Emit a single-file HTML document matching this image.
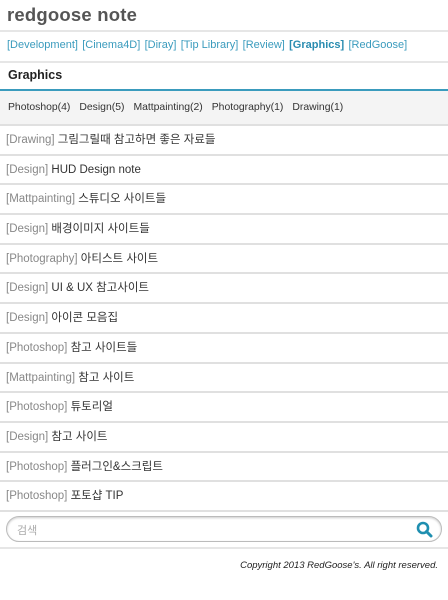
<!DOCTYPE html>
<html><head><meta charset="utf-8"><style>
*{margin:0;padding:0;box-sizing:border-box}
body{width:448px;height:600px;background:#fff;font-family:"Liberation Sans","Noto Sans CJK KR",sans-serif;overflow:hidden;position:relative}
h1{position:absolute;left:7px;top:4px;font-size:18.5px;color:#555;font-weight:bold;letter-spacing:0.2px}
.b{position:absolute;left:0;width:448px;height:2px;background:#e6e6e6}
.nav{position:absolute;left:7px;top:39px;font-size:11px;color:#3a9bbd;white-space:nowrap}
.nav span{margin-right:4.3px}
.nav b{color:#2a8cb0}
.h2{position:absolute;left:8px;top:68px;font-size:12.5px;font-weight:bold;color:#222}
.sub{position:absolute;left:0;top:89px;width:448px;height:35px;background:#f4f4f4;border-top:2px solid #3a9bbd}
.sub div{position:absolute;top:11px;left:8px;font-size:10.4px;color:#333;white-space:nowrap}
.sub span{margin-right:9px}
ul{position:absolute;top:124px;left:0;width:448px;list-style:none;border-top:2px solid #e0e0e0}
li{height:29.7px;line-height:28px;overflow:hidden;border-bottom:2px solid #e0e0e0;font-size:11.5px;color:#333;padding-left:6px;white-space:nowrap}
li i{font-style:normal;color:#888}
.search{position:absolute;left:6px;top:516px;width:436px;height:26px;border:1px solid #bbb;border-radius:13px;background:#fff;box-shadow:inset 0 1px 2px #ccc}
.search span{position:absolute;left:10px;top:5px;font-size:11px;color:#aaa}
.search svg{position:absolute;right:8px;top:4px}
.copy{position:absolute;right:10px;top:560px;font-size:9.5px;font-style:italic;color:#222}
</style></head><body>
<h1>redgoose note</h1>
<div class="b" style="top:30px"></div>
<div class="nav"><span>[Development]</span><span>[Cinema4D]</span><span>[Diray]</span><span>[Tip Library]</span><span>[Review]</span><span><b>[Graphics]</b></span><span>[RedGoose]</span></div>
<div class="b" style="top:61px"></div>
<div class="h2">Graphics</div>
<div class="sub"><div><span>Photoshop(4)</span><span>Design(5)</span><span>Mattpainting(2)</span><span>Photography(1)</span><span>Drawing(1)</span></div></div>
<ul>
<li><i>[Drawing]</i> 그림그릴때 참고하면 좋은 자료들</li>
<li><i>[Design]</i> HUD Design note</li>
<li><i>[Mattpainting]</i> 스튜디오 사이트들</li>
<li><i>[Design]</i> 배경이미지 사이트들</li>
<li><i>[Photography]</i> 아티스트 사이트</li>
<li><i>[Design]</i> UI &amp; UX 참고사이트</li>
<li><i>[Design]</i> 아이콘 모음집</li>
<li><i>[Photoshop]</i> 참고 사이트들</li>
<li><i>[Mattpainting]</i> 참고 사이트</li>
<li><i>[Photoshop]</i> 튜토리얼</li>
<li><i>[Design]</i> 참고 사이트</li>
<li><i>[Photoshop]</i> 플러그인&amp;스크립트</li>
<li><i>[Photoshop]</i> 포토샵 TIP</li>
</ul>
<div class="search"><span>검색</span><svg width="17" height="17" viewBox="0 0 17 17"><circle cx="7" cy="7" r="5" fill="none" stroke="#1f8fb0" stroke-width="2.6"/><path d="M10.5 10.5L15 15" stroke="#1f8fb0" stroke-width="3" stroke-linecap="round"/></svg></div>
<div class="b" style="top:547px"></div>
<div class="copy">Copyright 2013 RedGoose's. All right reserved.</div>
</body></html>
